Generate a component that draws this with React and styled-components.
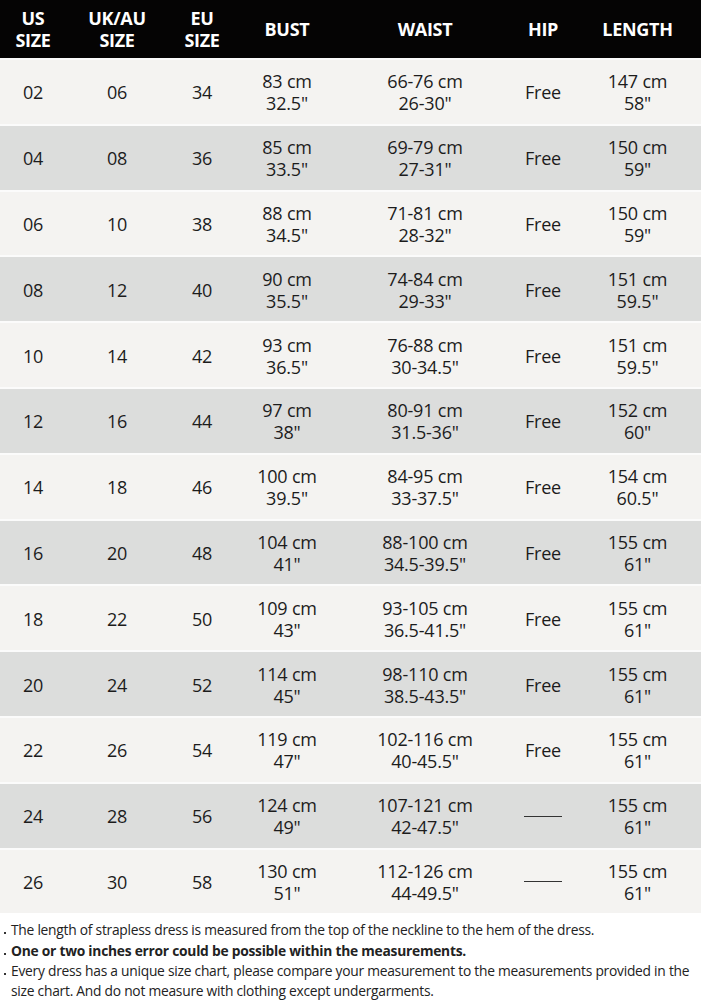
import React from "react";
import styled, { createGlobalStyle } from "styled-components";

const Global = createGlobalStyle`
  html, body { margin: 0; padding: 0; background: #ffffff; }
  body { font-family: "Open Sans", "Noto Sans", sans-serif; }
`;

const COLS = "66px 102px 68px 102px 174px 62px 127px";

const Page = styled.div`
  width: 701px;
  background: #fff;
`;

const Header = styled.div`
  display: grid;
  grid-template-columns: ${COLS};
  height: 58px;
  background: #050404;
  color: #fff;
  align-items: center;
`;

const HeadCell = styled.div`
  text-align: center;
  font-family: "Open Sans", sans-serif;
  font-weight: 700;
  font-size: 18px;
  line-height: 22px;
  letter-spacing: -0.3px;
`;

const Row = styled.div`
  display: grid;
  grid-template-columns: ${COLS};
  height: 63.8px;
  border-top: 2px solid #fbfbfb;
  background: ${(p) => (p.$alt ? "#dcdddc" : "#f4f3f1")};
  align-items: center;
  color: #1c1c1c;
`;

const Cell = styled.div`
  text-align: center;
  font-family: "Open Sans", sans-serif;
  font-size: 18px;
  line-height: 22px;
  letter-spacing: -0.2px;
  display: flex;
  flex-direction: column;
  align-items: center;
  padding-top: 1px;
`;

const Dash = styled.span`
  display: block;
  width: 38px;
  border-top: 1.5px solid #333;
`;

const Notes = styled.ul`
  list-style: none;
  margin: 0;
  padding: 7px 6px 0 11px;
  font-family: "Open Sans", sans-serif;
  font-size: 13.8px;
  line-height: 20.3px;
  color: #222;
  letter-spacing: -0.25px;
`;

const Note = styled.li`
  position: relative;
  font-weight: ${(p) => (p.$bold ? 700 : 400)};
  &::before {
    content: "";
    position: absolute;
    left: -7px;
    top: 12px;
    width: 2px;
    height: 2px;
    background: #333;
  }
`;

const rows = [
  ["02", "06", "34", "83 cm", '32.5"', "66-76 cm", '26-30"', "Free", "147 cm", '58"'],
  ["04", "08", "36", "85 cm", '33.5"', "69-79 cm", '27-31"', "Free", "150 cm", '59"'],
  ["06", "10", "38", "88 cm", '34.5"', "71-81 cm", '28-32"', "Free", "150 cm", '59"'],
  ["08", "12", "40", "90 cm", '35.5"', "74-84 cm", '29-33"', "Free", "151 cm", '59.5"'],
  ["10", "14", "42", "93 cm", '36.5"', "76-88 cm", '30-34.5"', "Free", "151 cm", '59.5"'],
  ["12", "16", "44", "97 cm", '38"', "80-91 cm", '31.5-36"', "Free", "152 cm", '60"'],
  ["14", "18", "46", "100 cm", '39.5"', "84-95 cm", '33-37.5"', "Free", "154 cm", '60.5"'],
  ["16", "20", "48", "104 cm", '41"', "88-100 cm", '34.5-39.5"', "Free", "155 cm", '61"'],
  ["18", "22", "50", "109 cm", '43"', "93-105 cm", '36.5-41.5"', "Free", "155 cm", '61"'],
  ["20", "24", "52", "114 cm", '45"', "98-110 cm", '38.5-43.5"', "Free", "155 cm", '61"'],
  ["22", "26", "54", "119 cm", '47"', "102-116 cm", '40-45.5"', "Free", "155 cm", '61"'],
  ["24", "28", "56", "124 cm", '49"', "107-121 cm", '42-47.5"', null, "155 cm", '61"'],
  ["26", "30", "58", "130 cm", '51"', "112-126 cm", '44-49.5"', null, "155 cm", '61"'],
];

export default function App() {
  return (
    <Page>
      <Global />
      <Header>
        <HeadCell>US<br />SIZE</HeadCell>
        <HeadCell>UK/AU<br />SIZE</HeadCell>
        <HeadCell>EU<br />SIZE</HeadCell>
        <HeadCell>BUST</HeadCell>
        <HeadCell>WAIST</HeadCell>
        <HeadCell>HIP</HeadCell>
        <HeadCell>LENGTH</HeadCell>
      </Header>
      {rows.map((r, i) => (
        <Row key={i} $alt={i % 2 === 1}>
          <Cell>{r[0]}</Cell>
          <Cell>{r[1]}</Cell>
          <Cell>{r[2]}</Cell>
          <Cell><span>{r[3]}</span><span>{r[4]}</span></Cell>
          <Cell><span>{r[5]}</span><span>{r[6]}</span></Cell>
          <Cell>{r[7] ? r[7] : <Dash />}</Cell>
          <Cell><span>{r[8]}</span><span>{r[9]}</span></Cell>
        </Row>
      ))}
      <Notes>
        <Note>The length of strapless dress is measured from the top of the neckline to the hem of the dress.</Note>
        <Note $bold>One or two inches error could be possible within the measurements.</Note>
        <Note>Every dress has a unique size chart, please compare your measurement to the measurements provided in the size chart. And do not measure with clothing except undergarments.</Note>
      </Notes>
    </Page>
  );
}
